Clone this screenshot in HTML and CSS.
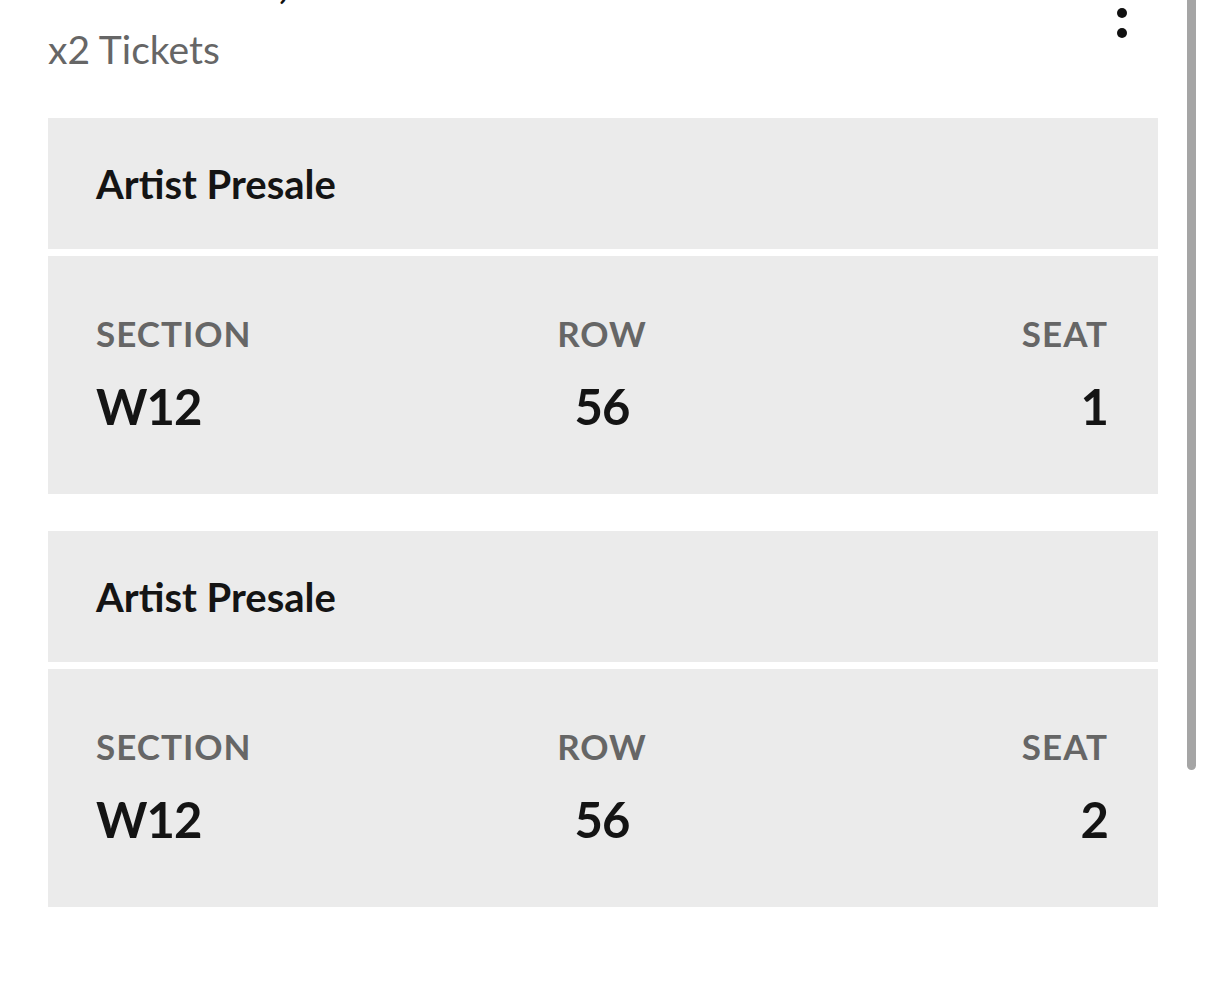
FILE: index.html
```html
<!DOCTYPE html>
<html lang="en">
<head>
    <meta charset="UTF-8">
    <meta name="viewport" content="width=device-width, initial-scale=1.0">
    <title>My Tickets</title>
    <link rel="stylesheet" href="styles.css">
</head>
<body>

    <div class="page">
        <div class="event-head">
            <div class="event-info">
                <h1 class="event-date">Sat &middot; Oct 05, 2024</h1>
                <p class="ticket-count">x2 Tickets</p>
            </div>
            <button class="more-btn" aria-label="More options">
                <svg width="24" height="90" viewBox="0 0 24 90">
                    <circle cx="12" cy="34" r="5" fill="#111"/>
                    <circle cx="12" cy="54" r="5" fill="#111"/>
                    <circle cx="12" cy="74" r="5" fill="#111"/>
                </svg>
            </button>
        </div>

        <div class="ticket">
            <div class="ticket-type">Artist Presale</div>
            <div class="ticket-seat">
                <div class="seat-col">
                    <span class="seat-label">SECTION</span>
                    <span class="seat-value">W12</span>
                </div>
                <div class="seat-col center">
                    <span class="seat-label">ROW</span>
                    <span class="seat-value">56</span>
                </div>
                <div class="seat-col right">
                    <span class="seat-label">SEAT</span>
                    <span class="seat-value">1</span>
                </div>
            </div>
        </div>

        <div class="ticket">
            <div class="ticket-type">Artist Presale</div>
            <div class="ticket-seat">
                <div class="seat-col">
                    <span class="seat-label">SECTION</span>
                    <span class="seat-value">W12</span>
                </div>
                <div class="seat-col center">
                    <span class="seat-label">ROW</span>
                    <span class="seat-value">56</span>
                </div>
                <div class="seat-col right">
                    <span class="seat-label">SEAT</span>
                    <span class="seat-value">2</span>
                </div>
            </div>
        </div>
    </div>

    <div class="scrollbar"></div>

</body>
</html>
```

FILE: styles.css
```css
body {
    font-family: Lato, "Noto Sans", sans-serif;
    background-color: #fff;
    margin: 0;
    padding: 0;
    overflow: hidden;
}

.page {
    padding: 0 48px;
}

.event-head {
    display: flex;
    justify-content: space-between;
    align-items: flex-start;
    margin-top: -41px;
}

.event-date {
    margin: 0;
    font-size: 44px;
    line-height: 1;
    font-weight: 700;
    color: #111;
}

.ticket-count {
    margin: 27px 0 0;
    font-size: 39px;
    line-height: 1;
    color: #666;
}

.more-btn {
    background: none;
    border: none;
    padding: 0;
    margin-right: 24px;
    cursor: pointer;
}

.more-btn svg {
    display: block;
}

.ticket {
    display: flex;
    flex-direction: column;
    gap: 7px;
    margin-top: 49px;
}

.ticket + .ticket {
    margin-top: 37px;
}

.ticket-type {
    height: 131px;
    display: flex;
    align-items: center;
    padding: 0 48px;
    background-color: #ebebeb;
    font-size: 40px;
    line-height: 1;
    font-weight: 700;
    color: #141414;
}

.ticket-seat {
    display: grid;
    grid-template-columns: 1fr 1fr 1fr;
    padding: 60px 50px 63px 48px;
    background-color: #ebebeb;
}

.seat-col {
    display: flex;
    flex-direction: column;
    align-items: flex-start;
    gap: 31px;
}

.seat-col.center {
    align-items: center;
}

.seat-col.right {
    align-items: flex-end;
}

.seat-label {
    font-size: 35px;
    line-height: 1;
    font-weight: 700;
    letter-spacing: 1px;
    color: #666;
}

.seat-value {
    font-size: 49px;
    line-height: 1;
    font-weight: 700;
    letter-spacing: -1px;
    color: #141414;
}

.scrollbar {
    position: fixed;
    top: -10px;
    left: 1187px;
    width: 9px;
    height: 780px;
    border-radius: 5px;
    background-color: #a5a5a5;
}
```
